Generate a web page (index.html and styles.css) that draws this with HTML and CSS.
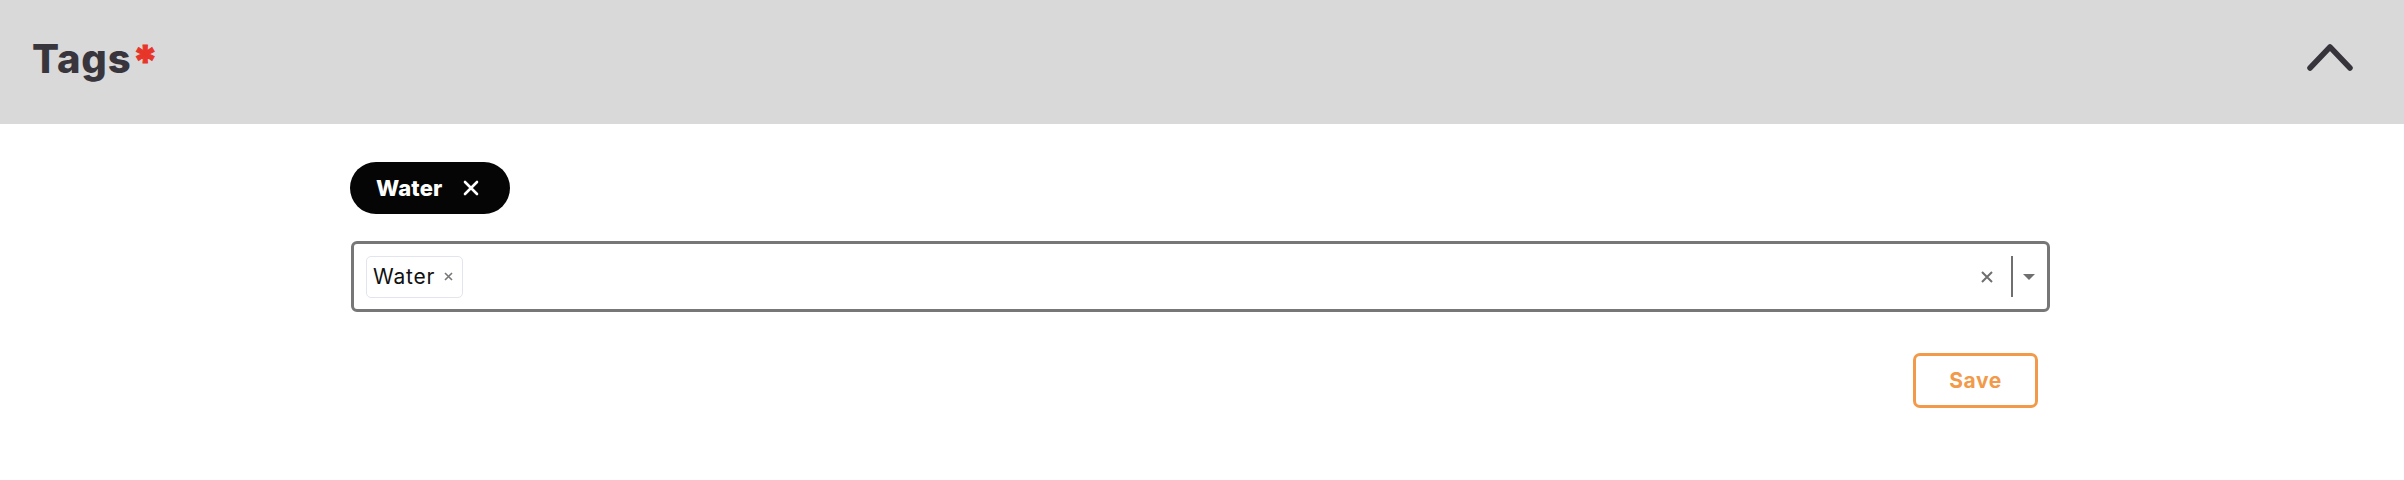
FILE: index.html
```html
<!DOCTYPE html>
<html>
<head>
<meta charset="utf-8">
<link rel="stylesheet" href="styles.css">
</head>
<body>
<header class="panel-header">
  <h1 class="title">Tags<span class="req">*</span></h1>
  <svg class="chevron" width="50" height="31" viewBox="0 0 50 31"><path d="M5 27 L25 6 L45 27" fill="none" stroke="#37353b" stroke-width="5.5" stroke-linecap="round" stroke-linejoin="round"/></svg>
</header>
<main class="content">
  <div class="chips">
    <span class="chip">Water<svg class="chip-x" width="16" height="16" viewBox="0 0 16 16"><path d="M2 2 L14 14 M14 2 L2 14" stroke="#fff" stroke-width="2.6" stroke-linecap="round"/></svg></span>
  </div>
  <div class="select">
    <div class="values">
      <span class="tag">Water<svg class="tag-x" width="9" height="9" viewBox="0 0 9 9"><path d="M1 1 L8 8 M8 1 L1 8" stroke="#777" stroke-width="1.6"/></svg></span>
    </div>
    <div class="indicators">
      <svg class="clear" width="12" height="12" viewBox="0 0 12 12"><path d="M1 1 L11 11 M11 1 L1 11" stroke="#6f6f6f" stroke-width="2"/></svg>
      <span class="divider"></span>
      <svg class="caret" width="12" height="6" viewBox="0 0 12 6"><path d="M0 0 L12 0 L6 6 Z" fill="#6f6f6f"/></svg>
    </div>
  </div>
  <div class="actions">
    <button class="save">Save</button>
  </div>
</main>
</body>
</html>
```
FILE: styles.css
```css
body {
  margin: 0;
  font-family: Inter, "Liberation Sans", sans-serif;
  background: #fff;
}
.panel-header {
  height: 124px;
  background: #d9d9d9;
  display: flex;
  align-items: center;
  justify-content: space-between;
  padding: 0 49px 12px 32px;
  box-sizing: border-box;
}
.title {
  margin: 0;
  font-size: 40px;
  font-weight: 800;
  color: #38363c;
  letter-spacing: 0.8px;
  line-height: 1;
  position: relative;
  top: 3px;
}
.req {
  color: #e8352a;
  font-size: 44px;
  font-weight: 800;
  -webkit-text-stroke: 1px #e8352a;
  position: relative;
  top: 4px;
  margin-left: 1px;
  line-height: 0;
}
.chevron {
  display: block;
}
.content {
  width: 1700px;
  margin-left: 350px;
  padding-top: 38px;
}
.chips {
  display: flex;
}
.chip {
  display: inline-flex;
  align-items: center;
  gap: 20px;
  height: 52px;
  padding: 0 31px 0 26px;
  background: #050505;
  color: #fff;
  border-radius: 26px;
  font-size: 22px;
  font-weight: 800;
  letter-spacing: 0.2px;
}
.select {
  margin-top: 27px;
  margin-left: 1px;
  height: 71px;
  box-sizing: border-box;
  border: 3px solid #777;
  border-radius: 6px;
  display: flex;
  align-items: center;
  justify-content: space-between;
  padding: 0 12px 0 12px;
}
.values {
  display: flex;
}
.tag {
  display: inline-flex;
  align-items: center;
  gap: 9px;
  height: 42px;
  box-sizing: border-box;
  padding: 0 9px 0 6px;
  border: 1px solid #e2e5ed;
  border-radius: 5px;
  font-size: 21px;
  color: #111;
  letter-spacing: 0.8px;
}
.indicators {
  display: flex;
  align-items: center;
}
.clear {
  margin-right: 18px;
}
.divider {
  width: 2px;
  height: 41px;
  background: #6f6f6f;
  margin-right: 10px;
}
.actions {
  display: flex;
  justify-content: flex-end;
  padding-right: 12px;
  margin-top: 41px;
}
.save {
  width: 125px;
  height: 55px;
  box-sizing: border-box;
  border: 3px solid #f29a4a;
  border-radius: 7px;
  background: #fff;
  color: #f29a4a;
  font-family: Inter, "Liberation Sans", sans-serif;
  font-size: 21px;
  font-weight: 700;
  letter-spacing: 0.5px;
}
```
